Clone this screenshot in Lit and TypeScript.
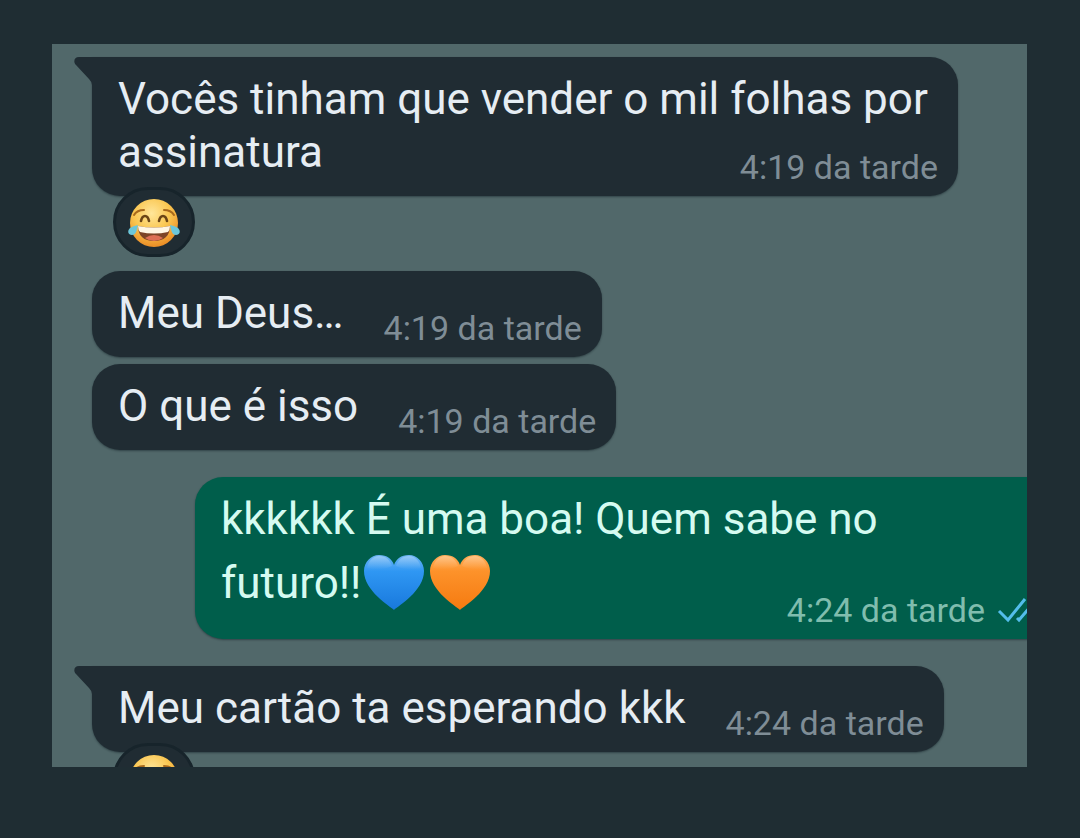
import { LitElement, html, css, svg, nothing } from "lit";
import { customElement, property } from "lit/decorators.js";
import { classMap } from "lit/directives/class-map.js";

interface Message {
  text: string;
  tail?: string;
  hearts?: boolean;
  time: string;
  outgoing?: boolean;
  first?: boolean;
  wrapped?: boolean;
  reaction?: boolean;
}

const messages: Message[] = [
  {
    text: "Vocês tinham que vender o mil folhas por assinatura",
    time: "4:19",
    first: true,
    wrapped: true,
    reaction: true,
  },
  { text: "Meu Deus…", time: "4:19" },
  { text: "O que é isso", time: "4:19" },
  {
    text: "kkkkkk É uma boa! Quem sabe no ",
    tail: "futuro!!",
    hearts: true,
    time: "4:24",
    outgoing: true,
    wrapped: true,
  },
  { text: "Meu cartão ta esperando kkk", time: "4:24", first: true, reaction: true },
];

const heart = (id: string, label: string, top: string, mid: string, low: string) => html`<svg
    class="heart" viewBox="0 0 64 60" role="img" aria-label=${label}>
    <defs>
      <linearGradient id=${id} x1="0" y1="0" x2="0" y2="1">
        <stop offset="0" stop-color=${top}></stop>
        <stop offset="0.3" stop-color=${mid}></stop>
        <stop offset="1" stop-color=${low}></stop>
      </linearGradient>
      <linearGradient id="${id}-shine" x1="0" y1="0" x2="0" y2="1">
        <stop offset="0" stop-color="#fff" stop-opacity="0.3"></stop>
        <stop offset="1" stop-color="#fff" stop-opacity="0"></stop>
      </linearGradient>
    </defs>
    <path
      fill="url(#${id})"
      d="M32 57 C28 53 2 38 2 18 C2 9 9 2 17 2 C25 2 30 6 32 12 C34 6 39 2 47 2 C55 2 62 9 62 18 C62 38 36 53 32 57 Z"
    ></path>
    <path
      fill="url(#${id}-shine)"
      d="M5 15 C6 8 11 3 17 3 C24 3 28 7 30 13 C22 17 12 17 5 15 Z M34 13 C36 7 40 3 47 3 C53 3 58 8 59 15 C52 17 42 17 34 13 Z"
    ></path>
  </svg>`;

const joyFace = svg`
  <defs>
    <radialGradient id="face" cx="0.45" cy="0.3" r="0.75">
      <stop offset="0" stop-color="#ffe69a"></stop>
      <stop offset="0.5" stop-color="#fac650"></stop>
      <stop offset="1" stop-color="#e8841f"></stop>
    </radialGradient>
  </defs>
  <circle cx="26" cy="27" r="24" fill="url(#face)"></circle>
  <path d="M6 19 Q9 14 16 14 M36 14 Q43 14 46 19" fill="none" stroke="#a8691c" stroke-width="2" stroke-linecap="round"></path>
  <path d="M13 25 Q14 20 17 20 Q20 20 21 25 M31 25 Q32 20 35 20 Q38 20 39 25" fill="none" stroke="#6b4516" stroke-width="2.6" stroke-linecap="round"></path>
  <path d="M10 30 Q26 33 42 30 C42 40 36 45 26 45 C16 45 10 40 10 30 Z" fill="#7d4426"></path>
  <path d="M17 42 Q26 36 35 42 Q31 45 26 45 Q21 45 17 42 Z" fill="#dd6f55"></path>
  <path d="M10 30 Q26 33 42 30 Q42 34 40 36 Q26 39 12 36 Q10 34 10 30 Z" fill="#fff6e4"></path>
  <path d="M10 29 C9 34 8 39 4 39 C0 39 -1 35 2 32 Q5 30 10 29 Z M42 29 C43 34 44 39 48 39 C52 39 53 35 50 32 Q47 30 42 29 Z" fill="#6cc6da"></path>
`;

@customElement("chat-bubble")
class ChatBubble extends LitElement {
  @property({ attribute: false }) message!: Message;

  static styles = css`
    :host {
      display: block;
    }
    .bubble {
      --fill: #202c33;
      position: relative;
      display: grid;
      grid-template-columns: auto auto;
      column-gap: 40px;
      align-items: end;
      padding: 16px 20px 9px 26px;
      border-radius: 28px;
      background: var(--fill);
      color: #e6edf3;
      box-shadow: 0 1px 2px rgba(10, 25, 30, 0.45);
    }
    .first {
      border-top-left-radius: 0;
    }
    .outgoing {
      --fill: #005e4b;
      color: #d5fbf1;
    }
    .text {
      margin: 0 0 8px;
      font-size: 44px;
      line-height: 53px;
    }
    .meta {
      display: flex;
      align-items: center;
      gap: 12px;
      font-size: 34px;
      line-height: 40px;
      white-space: nowrap;
      color: #7f8d96;
    }
    .outgoing .meta {
      color: #80bdae;
    }
    .wrapped {
      grid-template-columns: auto;
    }
    .wrapped .text,
    .wrapped .meta {
      grid-area: 1 / 1;
    }
    .wrapped .meta {
      justify-self: end;
    }
    .together {
      white-space: nowrap;
    }
    .heart {
      width: 64px;
      height: 60px;
      margin: 7px 1px 9px;
      vertical-align: -24px;
    }
    .tail {
      position: absolute;
      top: 0;
      right: 100%;
      width: 19px;
      height: 28px;
      margin-right: -1px;
      fill: var(--fill);
    }
    .ticks {
      width: 44px;
      height: 28px;
      fill: none;
      stroke: #53bdeb;
      stroke-width: 3;
    }
    .reaction {
      position: absolute;
      top: calc(100% - 9px);
      left: 21px;
      z-index: 1;
      display: grid;
      place-items: center;
      width: 82px;
      height: 70px;
      padding: 0;
      border: 3px solid #17242b;
      border-radius: 35px;
      background: #202c33;
    }
    .face {
      width: 52px;
      height: 52px;
      overflow: visible;
    }
  `;

  render() {
    const m = this.message;
    const classes = {
      bubble: true,
      first: !!m.first,
      outgoing: !!m.outgoing,
      wrapped: !!m.wrapped,
    };
    return html`
      <article class=${classMap(classes)}>
        ${m.first
          ? html`<svg class="tail" viewBox="0 0 19 28" aria-hidden="true">
              <path d="M19 0 H5 C0 0 -1 5 2 8 L15 22 Q18 25 18 28 H19 Z"></path>
            </svg>`
          : nothing}
        <p class="text">${m.text}${m.tail
            ? html`<span class="together">${m.tail}${m.hearts
                ? [
                    heart("blue", "💙", "#6db5f5", "#2f97f3", "#1878dc"),
                    heart("orange", "🧡", "#ffad58", "#fd922a", "#f57a10"),
                  ]
                : nothing}</span>`
            : nothing}</p>
        <div class="meta">
          <time datetime="16:${m.time.slice(2)}">${m.time} da tarde</time>
          ${m.outgoing
            ? html`<svg class="ticks" viewBox="0 0 44 28" role="img" aria-label="Lida">
                <path d="M2 15 L11 24 L28 3 M20 22 L22 24 L40 3"></path>
              </svg>`
            : nothing}
        </div>
        ${m.reaction
          ? html`<button class="reaction" type="button" aria-label="Reação 😂">
              <svg class="face" viewBox="0 0 52 52" aria-hidden="true">${joyFace}</svg>
            </button>`
          : nothing}
      </article>
    `;
  }
}

@customElement("app-root")
class AppRoot extends LitElement {
  static styles = css`
    :host {
      display: flex;
      box-sizing: border-box;
      height: 100vh;
      padding: 44px 53px 71px 52px;
      background: #1f2d33;
      font-family: Roboto, "Liberation Sans", sans-serif;
    }
    .chat {
      flex: 1;
      min-width: 0;
      overflow: hidden;
      background: #51686a;
    }
    .list {
      display: flex;
      flex-direction: column;
      align-items: flex-start;
      gap: 7px;
      margin: 0;
      padding: 13px 0 0 40px;
      list-style: none;
    }
    .item {
      max-width: 866px;
    }
    .reacted {
      margin-bottom: 68px;
    }
    .sent {
      align-self: flex-end;
      margin: 20px -34px 20px 0;
    }
  `;

  render() {
    return html`
      <main class="chat">
        <ol class="list">
          ${messages.map(
            (m) => html`<li class=${classMap({ item: true, reacted: !!m.reaction, sent: !!m.outgoing })}>
              <chat-bubble .message=${m}></chat-bubble>
            </li>`
          )}
        </ol>
      </main>
    `;
  }
}
